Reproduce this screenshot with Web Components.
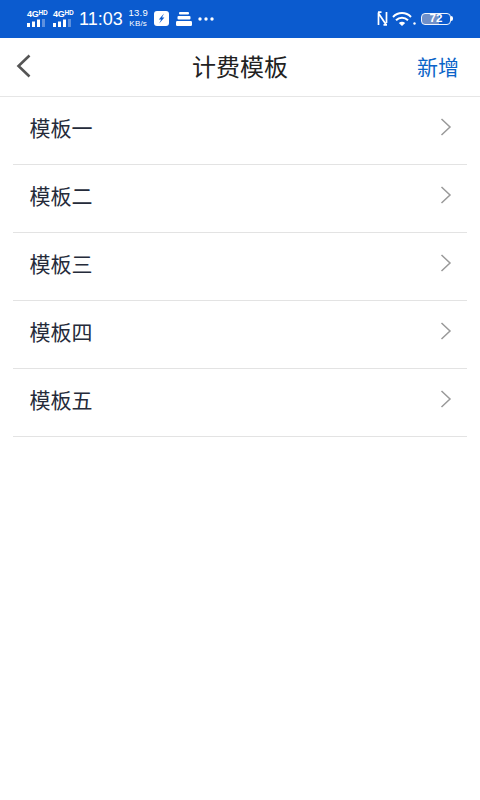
<!DOCTYPE html>
<html lang="zh-CN"><head><meta charset="utf-8">
<style>
html,body{margin:0;padding:0;background:#fff;width:480px;height:800px;overflow:hidden;font-family:"Noto Sans CJK SC","Liberation Sans",sans-serif}
</style></head><body>
<status-bar></status-bar>
<nav-bar title="计费模板" action="新增"></nav-bar>
<main>
<list-row>模板一</list-row>
<list-row>模板二</list-row>
<list-row>模板三</list-row>
<list-row>模板四</list-row>
<list-row>模板五</list-row>
</main>
<script>
class StatusBar extends HTMLElement{constructor(){super();const s=this.attachShadow({mode:'open'});
const sig=`<span class="sig"><span class="lab">4G<sup>HD</sup></span><svg width="20" height="8" viewBox="0 0 20 8"><rect x="0" y="4" width="3" height="4" fill="#fff"/><rect x="5" y="2.500" width="3" height="5.500" fill="#fff"/><rect x="10" y="0.500" width="3" height="7.500" fill="#fff"/><rect x="15" y="0" width="3" height="8" fill="#5d90de"/></svg></span>`;
s.innerHTML=`<style>
:host{display:flex;box-sizing:border-box;width:480px;height:38px;background:#0b5bcf;color:#fff;align-items:center;justify-content:space-between;font-family:"Liberation Sans",Arial,sans-serif;padding:0 27px 1px 27px}
.l,.r{display:flex;align-items:center}
.sig{display:flex;flex-direction:column;width:20px;margin-right:6px;gap:1px}
.lab{font-size:9px;font-weight:700;line-height:8px;white-space:nowrap;letter-spacing:-.3px}
sup{font-size:6.500px;vertical-align:2px;line-height:0;letter-spacing:0}
.time{font-size:18px;line-height:20px}
.sp{display:flex;flex-direction:column;align-items:center;width:19px;line-height:10.500px;margin-left:6px}
.sp span{font-size:9.500px;letter-spacing:.2px}
.sp b{font-weight:400;font-size:8px;letter-spacing:.2px}
svg{display:block}
.bat{display:block;margin-left:5px;width:30px;height:12px;box-sizing:border-box;border:1.500px solid #eef3fc;border-radius:4px;overflow:hidden;text-align:center;font-size:11.500px;font-weight:700;line-height:9px;background:linear-gradient(90deg,#6f8fc9 62%,#0b5bcf 62%)}
</style>
<div class="l">${sig}${sig}<span class="time">11:03</span><span class="sp"><span>13.9</span><b>KB/s</b></span>
<svg style="margin-left:6px" width="15" height="15" viewBox="0 0 15 15"><rect width="15" height="15" rx="3" fill="#fff"/><path d="M10 2.500 4.800 8.500h2.400L5.200 12.500 10.400 6.500H8z" fill="#0b5bcf"/></svg>
<svg style="margin-left:7px" width="16" height="14" viewBox="0 0 16 14"><rect x="3" y="0" width="10" height="2.400" rx="1" fill="#fff"/><rect x="1.500" y="4" width="13" height="3.400" rx="1" fill="#fff"/><rect x="0" y="9" width="16" height="5" rx="1.200" fill="#fff"/></svg>
<svg style="margin-left:6px" width="16" height="4" viewBox="0 0 16 4"><circle cx="2" cy="2" r="1.700" fill="#fff"/><circle cx="8" cy="2" r="1.700" fill="#fff"/><circle cx="14" cy="2" r="1.700" fill="#fff"/></svg>
</div>
<div class="r">
<svg width="11" height="15" viewBox="0 0 11 15" fill="none" stroke="#fff" stroke-width="1.700"><path d="M1.500 3v11M1 1.500 9 13.500M9.500 12V1M4.500 1.200H1M6.500 13.800h3.500"/></svg>
<svg style="margin-left:4px" width="20" height="14" viewBox="0 0 20 14" fill="none" stroke="#fff" stroke-width="2"><path d="M1 5C6-.2 14-.2 19 5M4 8.200C7.500 4.800 12.500 4.800 16 8.200"/><path d="M6.800 11c2-1.800 4.400-1.800 6.400 0l-3.200 3z" fill="#fff" stroke="none"/></svg>
<svg style="margin-left:1px;align-self:flex-end;margin-bottom:1px" width="3" height="3"><circle cx="1.500" cy="1.500" r="1.200" fill="#fff"/></svg>
<span class="bat">72</span>
<span style="display:block;width:2px;height:5px;background:#fff;border-radius:0 2px 2px 0"></span>
</div>`}}
customElements.define('status-bar',StatusBar);
class NavBar extends HTMLElement{constructor(){super();const s=this.attachShadow({mode:'open'});
s.innerHTML=`<style>
:host{display:flex;box-sizing:border-box;width:480px;height:59px;align-items:center;justify-content:space-between;background:#fff;border-bottom:1px solid #e6e6e6;padding:0 21px 2px 16px;position:relative;font-family:"Noto Sans CJK SC",sans-serif}
h1{position:absolute;left:0;right:0;text-align:center;margin:0;font-weight:400;font-size:24px;line-height:32px;color:#222;pointer-events:none}
a{font-size:21px;line-height:30px;color:#0a64c8}
svg{display:block}
</style>
<svg width="15" height="24" viewBox="0 0 15 24" fill="none" stroke="#555" stroke-width="2.600"><path d="M13.500 1.500 2.500 12l11 10.500"/></svg>
<h1 id="t"></h1><a id="a"></a>`;
s.getElementById('t').textContent=this.getAttribute('title');
s.getElementById('a').textContent=this.getAttribute('action');}}
customElements.define('nav-bar',NavBar);
class ListRow extends HTMLElement{constructor(){super();const s=this.attachShadow({mode:'open'});
s.innerHTML=`<style>
:host{display:flex;box-sizing:border-box;height:68px;margin:0 13px;padding:0 15px 8px 16.500px;align-items:center;justify-content:space-between;border-bottom:1px solid #e3e3e3;font-family:"Noto Sans CJK SC",sans-serif;font-size:21px;color:#252b3a}
svg{display:block}
</style><span><slot></slot></span>
<svg width="12" height="18" viewBox="0 0 12 18" fill="none" stroke="#999" stroke-width="1.500"><path d="M1.500 1 10 9l-8.500 8"/></svg>`}}
customElements.define('list-row',ListRow);
</script>
</body></html>
